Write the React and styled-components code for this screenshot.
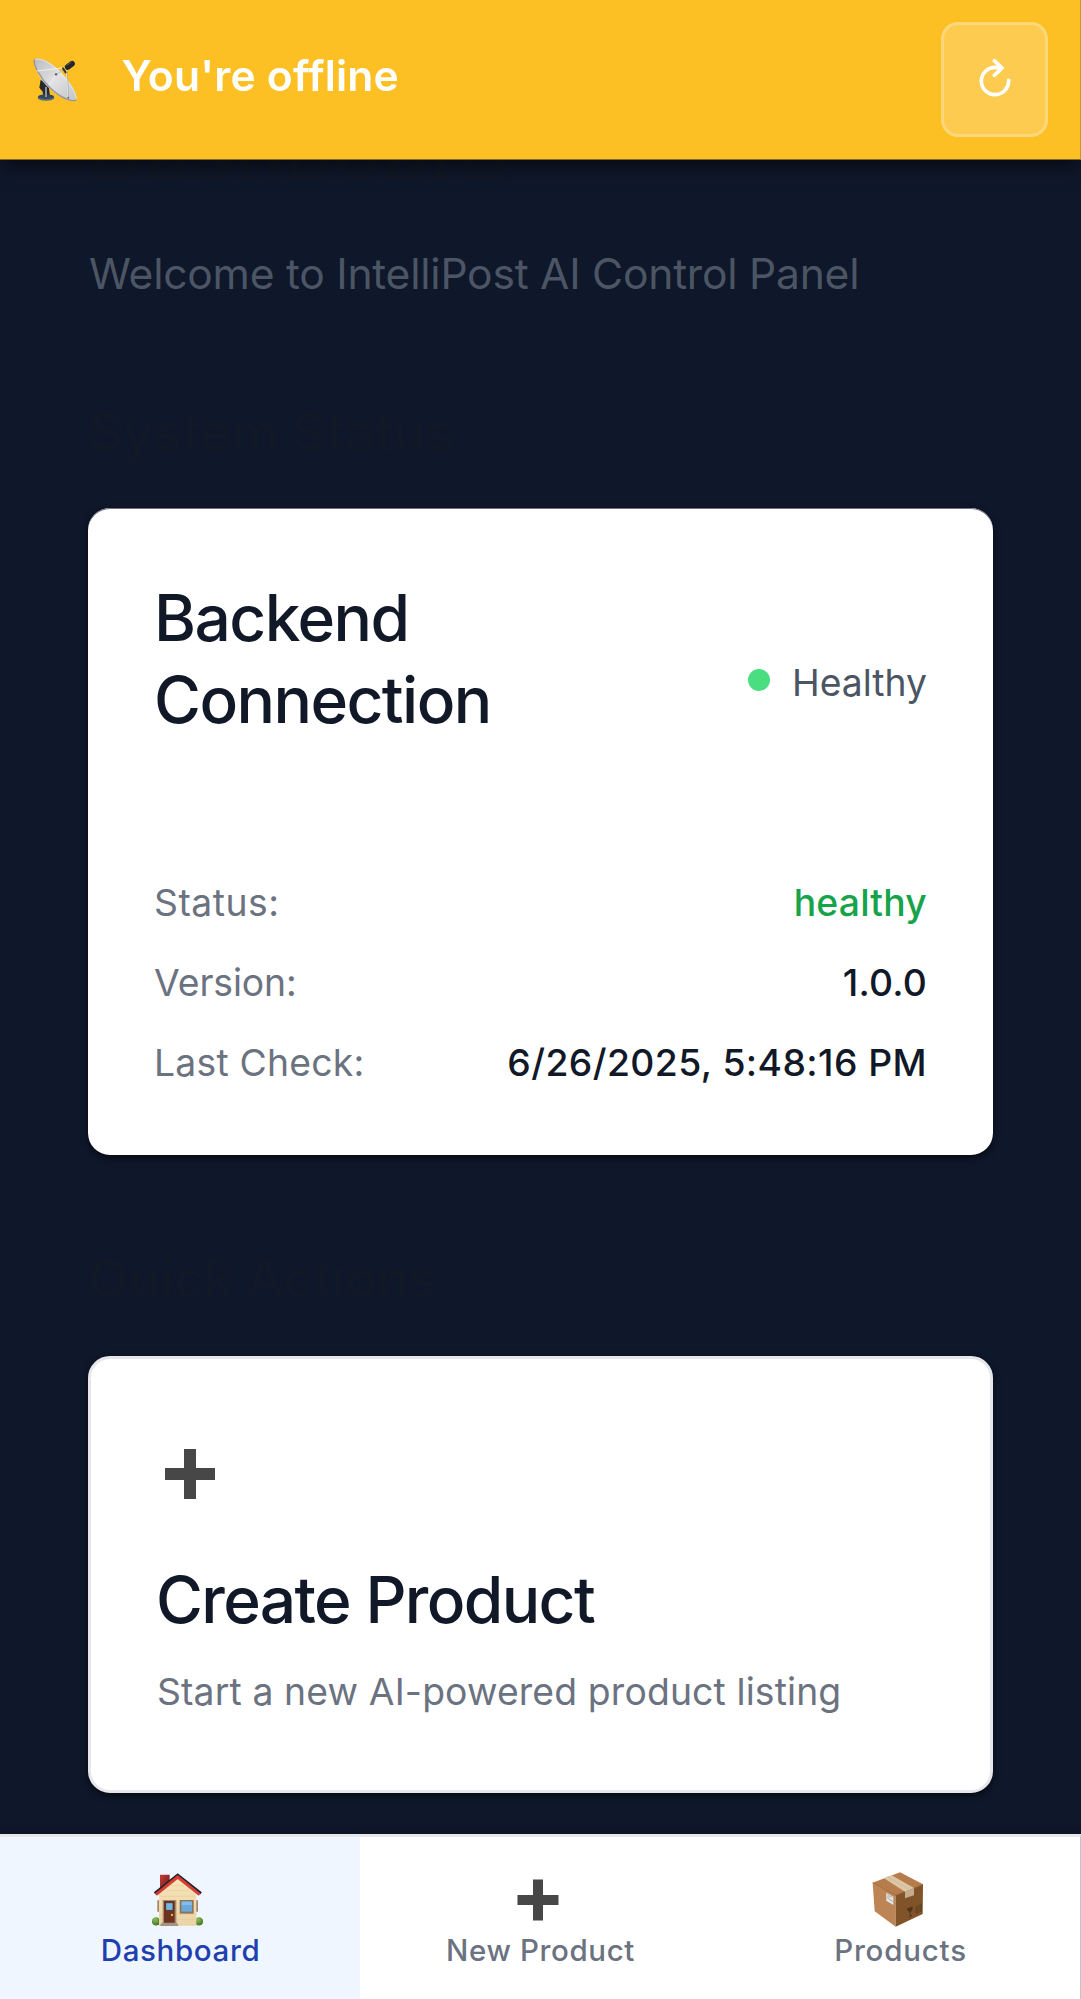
import React from "react";
import styled, { createGlobalStyle } from "styled-components";

const GlobalStyle = createGlobalStyle`
  * { box-sizing: border-box; }
  body {
    margin: 0;
    background: #0f172a;
    font-family: "Inter", "Liberation Sans", sans-serif;
    overflow: hidden;
  }
  h1, h2, h3, p { margin: 0; }
  svg { display: block; flex: none; }
`;

const Page = styled.div`
  height: 1999px;
  overflow: hidden;
  background: #0f172a;
`;

const Banner = styled.header`
  position: fixed;
  inset: 0 0 auto 0;
  z-index: 10;
  height: 160px;
  padding: 0 32px 0 33px;
  display: flex;
  align-items: center;
  background: #fcbf24;
  border-right: 1px solid #c4982b;
  border-bottom: 1px solid #86691f;
  box-shadow: 0 10px 16px -3px rgba(0, 0, 0, 0.5);
`;

const BannerText = styled.div`
  flex: 1;
  margin-left: 43.5px;
  padding-bottom: 7px;
  color: #fff;
  font-size: 42.6px;
  font-weight: 600;
  line-height: 60px;
  letter-spacing: 0.19px;
`;

const RetryButton = styled.button`
  width: 107px;
  height: 115px;
  padding: 0 0 3px;
  display: flex;
  align-items: center;
  justify-content: center;
  border: 3px solid rgba(255, 255, 255, 0.25);
  border-radius: 17px;
  background: rgba(255, 255, 255, 0.2);
`;

const Main = styled.main`
  padding: 105px 88px 0;
`;

const PageTitle = styled.h1`
  color: #111827;
  font-size: 78px;
  font-weight: 700;
  line-height: 96px;
  letter-spacing: 0.65px;
`;

const Subtitle = styled.p`
  margin-top: 40px;
  padding-left: 1px;
  color: #4b5563;
  font-size: 42.6px;
  line-height: 66px;
  letter-spacing: -0.25px;
`;

const SectionTitle = styled.h2`
  margin: ${(p) => p.$top}px 0 ${(p) => p.$bottom}px;
  color: #111827;
  font-size: 53.4px;
  font-weight: 600;
  line-height: 66px;
  letter-spacing: ${(p) => p.$tracking}px;
`;

const Card = styled.section`
  width: 905px;
  border-radius: 22px;
  background: #fff;
`;

const StatusCard = styled(Card)`
  height: 647px;
  padding: 69px 66px 0;
  box-shadow: inset 0 1px 0 #70747f, 0 3px 8px rgba(0, 0, 0, 0.3), 0 3px 5px rgba(0, 0, 0, 0.3);
`;

const StatusHeader = styled.div`
  display: flex;
  justify-content: space-between;
  align-items: center;
`;

const CardTitle = styled.h3`
  color: #111827;
  font-size: 64px;
  font-weight: 500;
  line-height: 82px;
  letter-spacing: ${(p) => p.$tracking}px;
`;

const StatusTitle = styled(CardTitle)`
  width: 400px;
  margin-bottom: 48px;
`;

const Health = styled.div`
  display: flex;
  align-items: center;
  gap: 22px;
  color: #4b5563;
  font-size: 37.3px;
  line-height: 58px;
`;

const Dot = styled.span`
  width: 22px;
  height: 22px;
  margin-bottom: 7px;
  border-radius: 50%;
  background: #4ade80;
`;

const Details = styled.div`
  margin-top: 85px;
  display: flex;
  flex-direction: column;
  gap: 22px;
`;

const Detail = styled.div`
  display: flex;
  justify-content: space-between;
  font-size: 37.3px;
  line-height: 57.75px;
`;

const Label = styled.span`
  color: #6b7280;
  letter-spacing: ${(p) => p.$tracking}px;
`;

const Value = styled.span`
  color: ${(p) => p.$color || "#111827"};
  font-weight: 500;
  letter-spacing: ${(p) => p.$tracking}px;
`;

const ActionCard = styled(Card)`
  height: 437px;
  padding: 82px 66px 0;
  border: 3px solid #e5e7eb;
  box-shadow: 0 3px 8px rgba(0, 0, 0, 0.3), 0 3px 5px rgba(0, 0, 0, 0.3);
`;

const ActionTitle = styled(CardTitle)`
  margin: 52px 0 22px -1px;
`;

const ActionText = styled.p`
  color: #6b7280;
  font-size: 37.3px;
  line-height: 58px;
  letter-spacing: 0.14px;
`;

const Nav = styled.nav`
  position: fixed;
  inset: auto 0 0 0;
  z-index: 10;
  height: 165px;
  display: grid;
  grid-template-columns: 360px 360px 1fr;
  border-top: 3px solid #e5e7eb;
  border-right: 1px solid #c3c5c9;
  background: #fff;
  box-shadow: 0 -3px 8px rgba(0, 0, 0, 0.2);
`;

const NavItem = styled.a`
  padding-top: 35px;
  display: flex;
  flex-direction: column;
  align-items: center;
  background: ${(p) => (p.$active ? "#eff6ff" : "#fff")};
  color: ${(p) => (p.$active ? "#1e40af" : "#6b7280")};
`;

const NavIcon = styled.span`
  height: 55px;
  margin-right: 5px;
  display: flex;
  align-items: center;
`;

const NavLabel = styled.span`
  margin-top: 3px;
  padding-left: 1px;
  font-size: 29.5px;
  font-weight: 500;
  line-height: 40px;
  letter-spacing: ${(p) => p.$tracking}px;
`;

function DishIcon() {
  return (
    <svg width="45" height="46" viewBox="39 50 135 138">
      <defs>
        <linearGradient id="dish" x1="0" y1="0" x2="1" y2="1">
          <stop offset="0" stopColor="#b9babd" />
          <stop offset="0.5" stopColor="#e2e2e4" />
          <stop offset="1" stopColor="#c3c4c8" />
        </linearGradient>
      </defs>
      <path d="M62 118l24 18 4 32H70l-2-14-10-12z" fill="#26292e" />
      <ellipse cx="78" cy="173" rx="25" ry="8" fill="#5d6b7c" />
      <ellipse cx="78" cy="169" rx="24" ry="7" fill="#34465e" />
      <path d="M75 140h6v30h-6z" fill="#8b929b" />
      <path d="M43 57c16-9 52 8 83 42 30 32 50 70 42 79-9 9-47-2-80-34C55 113 38 72 43 57z" fill="url(#dish)" />
      <path d="M43 57c-3 17 17 56 48 86 33 32 68 44 77 35" fill="none" stroke="#94969b" strokeWidth="4" />
      <path d="M47 57c20-4 50 14 77 43 27 28 46 62 44 76" fill="none" stroke="#f1f1f2" strokeWidth="2" />
      <path d="M50 92l84-10M108 102l30-18M108 102l-21 32M140 90l5 82" fill="none" stroke="#f0f0f1" strokeWidth="3" />
      <path d="M107 103l26-16M142 92l4 80" fill="none" stroke="#85888d" strokeWidth="1.5" />
      <circle cx="108" cy="102" r="3.5" fill="#5a5d61" />
      <circle cx="145" cy="172" r="2.5" fill="#5a5d61" />
      <path d="M129 84l8 12" stroke="#3b3526" strokeWidth="6" strokeLinecap="round" />
      <path d="M143 80l13-10" stroke="#23262a" strokeWidth="17" strokeLinecap="round" />
      <path d="M141 75l12-9" stroke="#5b5f64" strokeWidth="3" strokeLinecap="round" />
    </svg>
  );
}

function RetryIcon() {
  return (
    <svg width="36" height="42" viewBox="230 174 108 126" fill="none" stroke="#fff" strokeWidth="11" strokeLinecap="round" strokeLinejoin="round">
      <path d="M325 244a41 41 0 1 1-41-39L304 207M282 185l23 22-23 22" />
    </svg>
  );
}

function PlusIcon({ size, thickness, box }) {
  const c = box / 2;
  const a = (box - size) / 2;
  return (
    <svg width={box} height={box} viewBox={`0 0 ${box} ${box}`}>
      <path d={`M${a} ${c}H${box - a}M${c} ${a}V${box - a}`} stroke="#474747" strokeWidth={thickness} />
    </svg>
  );
}

function HouseIcon() {
  return (
    <svg width="51" height="54" viewBox="36 38 153 162">
      <defs>
        <linearGradient id="wall" x1="0" y1="0" x2="0" y2="1">
          <stop offset="0" stopColor="#f9e5b8" />
          <stop offset="1" stopColor="#ead3a6" />
        </linearGradient>
        <linearGradient id="chimney" x1="0" y1="0" x2="1" y2="1">
          <stop offset="0" stopColor="#c63d38" />
          <stop offset="1" stopColor="#6d1714" />
        </linearGradient>
        <radialGradient id="bush" cx="0.4" cy="0.3" r="0.8">
          <stop offset="0" stopColor="#8cc152" />
          <stop offset="1" stopColor="#38681f" />
        </radialGradient>
      </defs>
      <path d="M60 43h29v30L60 90z" fill="url(#chimney)" />
      <path d="M52 120h6v34h-6zM168 120h6v34h-6z" fill="#a08468" />
      <circle cx="48" cy="183" r="12.5" fill="url(#bush)" />
      <circle cx="177" cy="183" r="12.5" fill="url(#bush)" />
      <path d="M57 98l57-47 55 47v98H57z" fill="url(#wall)" />
      <path d="M62 108h103M60 162h110M60 177h110M80 91h67M95 76h37" stroke="#e0c698" strokeWidth="1.5" />
      <path d="M44 99l69-55 70 55" fill="none" stroke="#202329" strokeWidth="8" />
      <path d="M48 103l65-53 66 53" fill="none" stroke="#d73d35" strokeWidth="9" />
      <path d="M68 119h41v71H68z" fill="#a58a68" />
      <path d="M72 122h32v67H72z" fill="#6d3220" />
      <path d="M77 127h22v23H77z" fill="#74b7e2" stroke="#4a2015" strokeWidth="2" />
      <circle cx="96" cy="164" r="3.5" fill="#efb447" />
      <path d="M119 119h42v41h-42z" fill="#8d735b" />
      <path d="M124 123h32v31h-32z" fill="#69a9dc" />
      <path d="M125 124h30v10h-30z" fill="#85bde5" />
      <path d="M65 187h46l5 10H60z" fill="#a39584" />
    </svg>
  );
}

function BoxIcon() {
  return (
    <svg width="52" height="55" viewBox="39 36 156 165">
      <path d="M41 68l82-31 69 36-82 35z" fill="#b67c4b" />
      <path d="M41 68l69 38v94l-63-46z" fill="#bd8555" />
      <path d="M110 106l82-33-1 89-81 38z" fill="#805329" />
      <path d="M41 68l69 38 82-33" fill="none" stroke="#a06a3a" strokeWidth="2.5" />
      <path d="M75 55l23-9 67 38-27 11z" fill="#dcc6a6" />
      <path d="M85 50l65 38" stroke="#cdb592" strokeWidth="2" />
      <path d="M138 95l27-11v22l-27 9z" fill="#c4ad8c" />
      <path d="M82 98l21 12v25l-21-13z" fill="#e6e7e8" />
      <path d="M85 104l15 9M85 109l7 4M85 114l15 9M94 120l7 4" stroke="#a3a6ab" strokeWidth="2.5" />
      <path d="M143 147l17-7c1 9-2 14-7 16v14l6-2M153 170l-6 3" fill="#50331b" stroke="#50331b" strokeWidth="1.5" />
      <path d="M172 138v22l5-2v-22M183 133v22l4-2v-22" fill="none" stroke="#50331b" strokeWidth="2" />
    </svg>
  );
}

export default function App() {
  return (
    <Page>
      <GlobalStyle />
      <Banner>
        <DishIcon />
        <BannerText>You're offline</BannerText>
        <RetryButton aria-label="Retry">
          <RetryIcon />
        </RetryButton>
      </Banner>
      <Main>
        <PageTitle>Dashboard</PageTitle>
        <Subtitle>Welcome to IntelliPost AI Control Panel</Subtitle>
        <SectionTitle $top={92} $bottom={43} $tracking={-0.45}>System Status</SectionTitle>
        <StatusCard>
          <StatusHeader>
            <StatusTitle $tracking={-1.55}>Backend Connection</StatusTitle>
            <Health>
              <Dot />
              Healthy
            </Health>
          </StatusHeader>
          <Details>
            <Detail>
              <Label $tracking={0.5}>Status:</Label>
              <Value $color="#16a34a" $tracking={0.21}>healthy</Value>
            </Detail>
            <Detail>
              <Label $tracking={-0.1}>Version:</Label>
              <Value $tracking={0.2}>1.0.0</Value>
            </Detail>
            <Detail>
              <Label $tracking={0.22}>Last Check:</Label>
              <Value $tracking={0.41}>6/26/2025, 5:48:16 PM</Value>
            </Detail>
          </Details>
        </StatusCard>
        <SectionTitle $top={91} $bottom={44} $tracking={-0.8}>Quick Actions</SectionTitle>
        <ActionCard>
          <PlusIcon size={50} thickness={12} box={66} />
          <ActionTitle $tracking={-1.63}>Create Product</ActionTitle>
          <ActionText>Start a new AI-powered product listing</ActionText>
        </ActionCard>
      </Main>
      <Nav>
        <NavItem $active>
          <NavIcon><HouseIcon /></NavIcon>
          <NavLabel $tracking={0.635}>Dashboard</NavLabel>
        </NavItem>
        <NavItem>
          <NavIcon><PlusIcon size={41} thickness={10} box={54} /></NavIcon>
          <NavLabel $tracking={0.613}>New Product</NavLabel>
        </NavItem>
        <NavItem>
          <NavIcon><BoxIcon /></NavIcon>
          <NavLabel $tracking={0.8}>Products</NavLabel>
        </NavItem>
      </Nav>
    </Page>
  );
}
